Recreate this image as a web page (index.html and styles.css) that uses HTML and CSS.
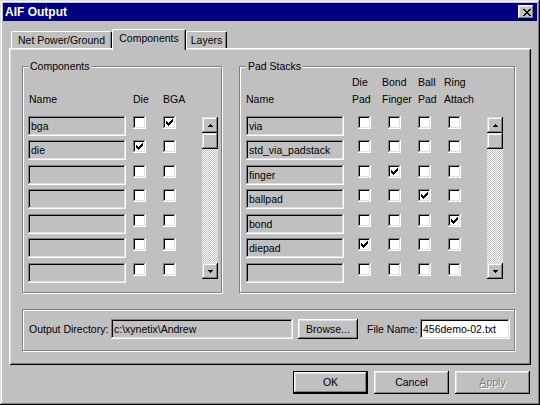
FILE: index.html
```html
<!DOCTYPE html>
<html lang="en">
<head>
	<meta charset="UTF-8">
	<title>AIF Output</title>
	<link rel="stylesheet" href="styles.css">
</head>
<body>
	<div class="window">
		<div class="titlebar">
			<span class="title">AIF Output</span>
			<span class="close-btn">
				<svg width="8" height="7" viewBox="0 0 8 7"><path d="M0 0h2v1h-2zM6 0h2v1h-2zM1 1h2v1h-2zM5 1h2v1h-2zM2 2h4v1h-4zM3 3h2v1h-2zM2 4h4v1h-4zM1 5h2v1h-2zM5 5h2v1h-2zM0 6h2v1h-2zM6 6h2v1h-2z"/></svg>
			</span>
		</div>

		<div class="tabs">
			<div class="tab tab-power">Net Power/Ground</div>
			<div class="tab tab-active">Components</div>
			<div class="tab tab-layers">Layers</div>
		</div>

		<div class="panel">
			<div class="groups">
				<!-- Components -->
				<div class="group group-comp">
					<div class="legend">Components</div>
					<div class="list-head comp-cols">
						<div class="head-name">Name</div>
						<div>Die</div>
						<div>BGA</div>
					</div>
					<div class="list">
						<div class="rows comp-cols">
							<div class="field">bga</div>
							<span class="check"></span>
							<span class="check"><svg width="7" height="7" viewBox="0 0 7 7"><path d="M0 2h1v1h1v1h1v-1h1v-1h1v-1h1v-1h1v3h-1v1h-1v1h-1v1h-1v1h-1v-1h-1v-1h-1v-1h-1z"/></svg></span>

							<div class="field">die</div>
							<span class="check"><svg width="7" height="7" viewBox="0 0 7 7"><path d="M0 2h1v1h1v1h1v-1h1v-1h1v-1h1v-1h1v3h-1v1h-1v1h-1v1h-1v1h-1v-1h-1v-1h-1v-1h-1z"/></svg></span>
							<span class="check"></span>

							<div class="field"></div>
							<span class="check"></span>
							<span class="check"></span>

							<div class="field"></div>
							<span class="check"></span>
							<span class="check"></span>

							<div class="field"></div>
							<span class="check"></span>
							<span class="check"></span>

							<div class="field"></div>
							<span class="check"></span>
							<span class="check"></span>

							<div class="field"></div>
							<span class="check"></span>
							<span class="check"></span>
						</div>
						<div class="scrollbar">
							<span class="sb-btn"><svg width="5" height="3" viewBox="0 0 5 3"><path d="M2 0h1v1h1v1h1v1h-5v-1h1v-1h1z"/></svg></span>
							<span class="sb-thumb"></span>
							<span class="sb-track"></span>
							<span class="sb-btn"><svg width="5" height="3" viewBox="0 0 5 3"><path d="M0 0h5v1h-1v1h-1v1h-1v-1h-1v-1h-1z"/></svg></span>
						</div>
					</div>
				</div>

				<!-- Pad Stacks -->
				<div class="group group-pads">
					<div class="legend">Pad Stacks</div>
					<div class="list-head pad-head">
						<div>Name</div>
						<div>Die<br>Pad</div>
						<div>Bond<br>Finger</div>
						<div>Ball<br>Pad</div>
						<div>Ring<br>Attach</div>
					</div>
					<div class="list">
						<div class="rows pad-cols">
							<div class="field">via</div>
							<span class="check"></span>
							<span class="check"></span>
							<span class="check"></span>
							<span class="check"></span>

							<div class="field">std_via_padstack</div>
							<span class="check"></span>
							<span class="check"></span>
							<span class="check"></span>
							<span class="check"></span>

							<div class="field">finger</div>
							<span class="check"></span>
							<span class="check"><svg width="7" height="7" viewBox="0 0 7 7"><path d="M0 2h1v1h1v1h1v-1h1v-1h1v-1h1v-1h1v3h-1v1h-1v1h-1v1h-1v1h-1v-1h-1v-1h-1v-1h-1z"/></svg></span>
							<span class="check"></span>
							<span class="check"></span>

							<div class="field">ballpad</div>
							<span class="check"></span>
							<span class="check"></span>
							<span class="check"><svg width="7" height="7" viewBox="0 0 7 7"><path d="M0 2h1v1h1v1h1v-1h1v-1h1v-1h1v-1h1v3h-1v1h-1v1h-1v1h-1v1h-1v-1h-1v-1h-1v-1h-1z"/></svg></span>
							<span class="check"></span>

							<div class="field">bond</div>
							<span class="check"></span>
							<span class="check"></span>
							<span class="check"></span>
							<span class="check"><svg width="7" height="7" viewBox="0 0 7 7"><path d="M0 2h1v1h1v1h1v-1h1v-1h1v-1h1v-1h1v3h-1v1h-1v1h-1v1h-1v1h-1v-1h-1v-1h-1v-1h-1z"/></svg></span>

							<div class="field">diepad</div>
							<span class="check"><svg width="7" height="7" viewBox="0 0 7 7"><path d="M0 2h1v1h1v1h1v-1h1v-1h1v-1h1v-1h1v3h-1v1h-1v1h-1v1h-1v1h-1v-1h-1v-1h-1v-1h-1z"/></svg></span>
							<span class="check"></span>
							<span class="check"></span>
							<span class="check"></span>

							<div class="field"></div>
							<span class="check"></span>
							<span class="check"></span>
							<span class="check"></span>
							<span class="check"></span>
						</div>
						<div class="scrollbar">
							<span class="sb-btn"><svg width="5" height="3" viewBox="0 0 5 3"><path d="M2 0h1v1h1v1h1v1h-5v-1h1v-1h1z"/></svg></span>
							<span class="sb-thumb"></span>
							<span class="sb-track"></span>
							<span class="sb-btn"><svg width="5" height="3" viewBox="0 0 5 3"><path d="M0 0h5v1h-1v1h-1v1h-1v-1h-1v-1h-1z"/></svg></span>
						</div>
					</div>
				</div>
			</div>

			<div class="group output-group">
				<span class="label label-dir">Output Directory:</span>
				<div class="field field-dir">c:\xynetix\Andrew</div>
				<span class="btn btn-browse">Browse...</span>
				<span class="label label-file">File Name:</span>
				<div class="field field-file">456demo-02.txt</div>
			</div>
		</div>

		<div class="actions">
			<span class="btn btn-default">OK</span>
			<span class="btn">Cancel</span>
			<span class="btn btn-disabled"><u>A</u>pply</span>
		</div>
	</div>
</body>
</html>
```

FILE: styles.css
```css
body {
	margin: 0;
	background-color: #c0c0c0;
	font-family: "Liberation Sans", Arial, sans-serif;
	font-size: 10.5px;
	color: #000;
}
.window {
	width: 540px;
	height: 405px;
	box-sizing: border-box;
	padding: 3px;
	background-color: #c0c0c0;
	box-shadow: inset -1px -1px #000, inset 1px 1px #dfdfdf, inset -2px -2px #808080, inset 2px 2px #fff;
}
.titlebar {
	display: flex;
	align-items: center;
	justify-content: space-between;
	height: 18px;
	padding: 0 3px 0 2px;
	background-color: #000080;
	color: #fff;
}
.title {
	font-size: 12px;
	font-weight: bold;
}
.close-btn {
	display: flex;
	justify-content: center;
	align-items: center;
	width: 16px;
	height: 14px;
	background-color: #c0c0c0;
	box-shadow: inset -1px -1px #000, inset 1px 1px #fff, inset -2px -2px #808080, inset 2px 2px #dfdfdf;
}
.close-btn svg {
	display: block;
	margin-left: 1px;
}

/* tabs */
.tabs {
	display: flex;
	align-items: flex-end;
	height: 19px;
	margin: 8px 0 0 8px;
}
.tab {
	height: 17px;
	box-sizing: border-box;
	padding-top: 2px;
	line-height: 13px;
	text-align: center;
	border-top: 1px solid #fff;
	border-left: 1px solid #fff;
	border-right: 1px solid #000;
	border-radius: 2px 2px 0 0;
	box-shadow: inset -1px 0 #808080;
	background-color: #c0c0c0;
}
.tab-power {
	width: 101px;
}
.tab-active {
	position: relative;
	z-index: 1;
	width: 74px;
	height: 21px;
	margin-bottom: -2px;
}
.tab-layers {
	width: 41px;
}
.panel {
	width: 522px;
	height: 317px;
	box-sizing: border-box;
	margin-left: 6px;
	padding: 18px 0 0 13px;
	box-shadow: inset 1px 1px #fff, inset -1px -1px #000, inset 2px 2px #dfdfdf, inset -2px -2px #808080;
}

/* group boxes */
.groups {
	display: flex;
	gap: 17px;
	height: 227px;
}
.group {
	box-sizing: border-box;
	border: 1px solid #808080;
	box-shadow: inset 1px 1px #fff, 1px 1px #fff;
}
.group-comp {
	width: 200px;
	padding-left: 5px;
}
.group-pads {
	width: 276px;
	padding-left: 6px;
}
.legend {
	width: fit-content;
	margin-top: -7px;
	padding: 0 2px;
	line-height: 13px;
	background-color: #c0c0c0;
}
.list-head {
	display: grid;
	align-items: end;
	height: 34px;
	margin-top: 1px;
	line-height: 17px;
}
.head-name {
	padding-left: 1px;
}
.comp-cols {
	grid-template-columns: 105px 30px 39px;
}
.pad-head {
	grid-template-columns: 106px 30px 36px 26px auto;
}
.pad-cols {
	grid-template-columns: 112px 30px 30px 30px 39px;
}
.list {
	display: flex;
	align-items: flex-start;
	margin-top: 8px;
}
.rows {
	display: grid;
	grid-template-rows: 24px 25px 24px 25px 24px 25px 24px;
	align-items: start;
}

/* fields */
.field {
	width: 98px;
	height: 20px;
	box-sizing: border-box;
	padding-left: 3px;
	line-height: 20px;
	white-space: nowrap;
	overflow: hidden;
	box-shadow: inset -1px -1px #fff, inset 1px 1px #808080, inset -2px -2px #dfdfdf, inset 2px 2px #000;
}
.check {
	display: block;
	width: 13px;
	height: 13px;
	box-sizing: border-box;
	padding: 3px;
	background-color: #fff;
	box-shadow: inset -1px -1px #fff, inset 1px 1px #808080, inset -2px -2px #dfdfdf, inset 2px 2px #000;
}
.check svg {
	display: block;
}

/* scrollbar */
.scrollbar {
	display: flex;
	flex-direction: column;
	width: 16px;
	height: 162px;
	margin-top: 1px;
}
.sb-btn,
.sb-thumb {
	display: flex;
	justify-content: center;
	align-items: center;
	height: 16px;
	flex: none;
	background-color: #c0c0c0;
	box-shadow: inset -1px -1px #000, inset 1px 1px #dfdfdf, inset -2px -2px #808080, inset 2px 2px #fff;
}
.sb-track {
	flex: 1;
	background: repeating-conic-gradient(#fff 0 25%, #c0c0c0 0 50%) 0 0 / 2px 2px;
}

/* buttons */
.btn {
	display: block;
	flex: none;
	width: 75px;
	height: 23px;
	box-sizing: border-box;
	line-height: 23px;
	text-align: center;
	box-shadow: inset -1px -1px #000, inset 1px 1px #fff, inset -2px -2px #808080, inset 2px 2px #dfdfdf;
}
.btn-default {
	border: 1px solid #000;
	line-height: 21px;
}
.btn-disabled {
	color: #808080;
	text-shadow: 1px 1px #fff;
}
.actions {
	display: flex;
	justify-content: flex-end;
	gap: 6px;
	margin-top: 6px;
	padding-right: 7px;
}

/* output row */
.output-group {
	display: flex;
	align-items: flex-start;
	width: 493px;
	height: 42px;
	margin-top: 16px;
	padding: 9px 0 0 6px;
}
.output-group > * {
	flex: none;
}
.label {
	line-height: 20px;
	white-space: nowrap;
}
.label-dir {
	width: 82px;
}
.field-dir {
	width: 182px;
}
.btn-browse {
	width: 60px;
	height: 20px;
	margin-left: 5px;
	line-height: 20px;
}
.label-file {
	width: 53px;
	margin-left: 9px;
}
.field-file {
	width: 90px;
	background-color: #fff;
}
```
